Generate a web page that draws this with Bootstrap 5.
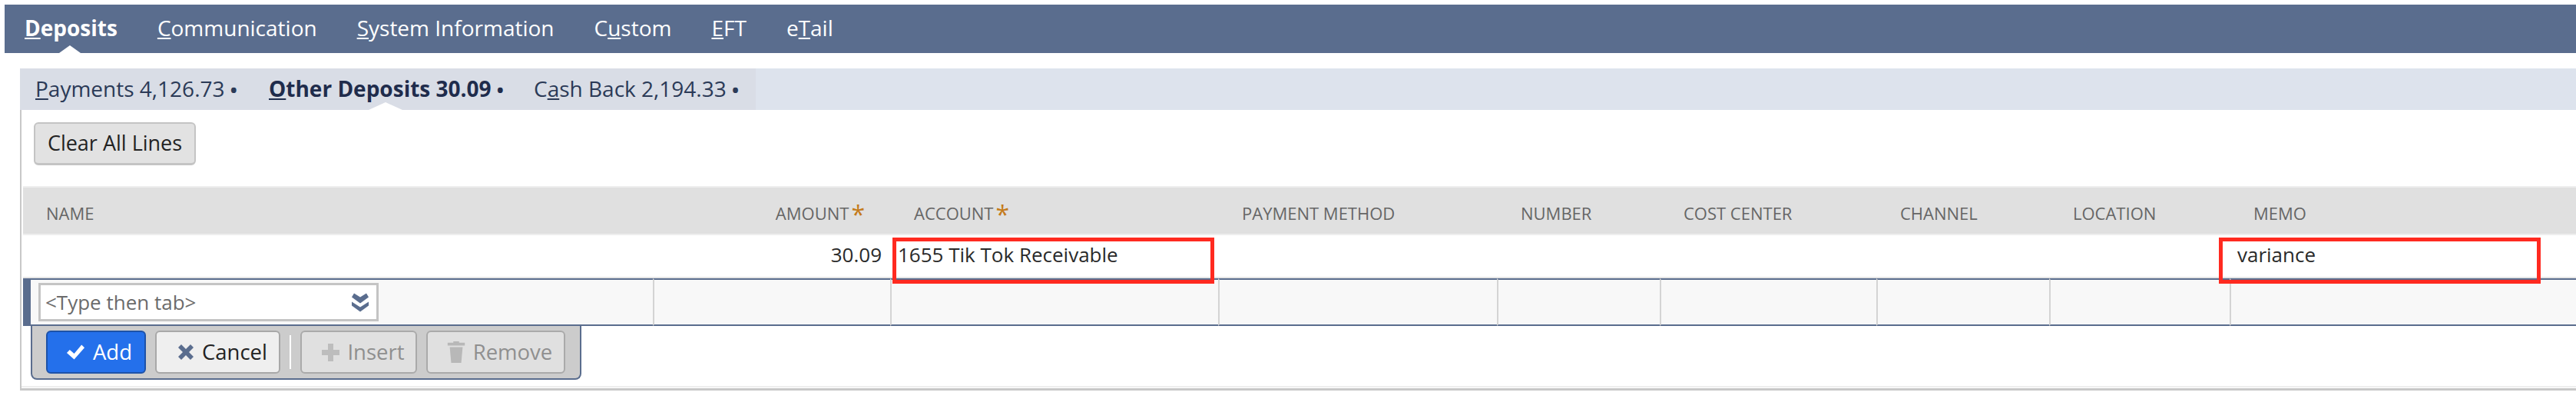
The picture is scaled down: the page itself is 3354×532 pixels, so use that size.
<!DOCTYPE html>
<html lang="en"><head><meta charset="utf-8"><title>Deposits</title>
<link rel="stylesheet" href="https://cdn.jsdelivr.net/npm/bootstrap@5.3.0/dist/css/bootstrap.min.css">
<style>
html,body{height:532px;overflow:hidden;background:#fff}
body{font-family:"Open Sans",sans-serif;color:#222;position:relative}
.top-tabs{margin:6px 0 0 6px;height:63px;background:#5a6d8e;padding-left:26px;gap:52px;font-size:28px;color:#fff;position:relative}
.top-tabs span{position:relative;line-height:61px;height:63px}
.top-tabs .on{font-weight:700}
.top-tabs .on::after{content:"";position:absolute;left:45px;bottom:0;border:14px solid transparent;border-top:0;border-bottom:10px solid #fff}
.sub-wrap{margin:20px 0 0 26px;height:54px;background:#dde3ed}
.sub-tabs{height:54px;width:958px;background:#d9dde6;padding-left:20px;font-size:28px;color:#2b3a57}
.sub-tabs span{position:relative;line-height:53px;white-space:nowrap}
.sub-tabs .t1{width:304px}.sub-tabs .t2{width:345px;font-weight:700;color:#1f2c4c}
.sub-tabs .dot{font-weight:700;font-size:24px}
.sub-tabs .t2::after{content:"";position:absolute;left:130px;bottom:0;border:22px solid transparent;border-top:0;border-bottom:10px solid #fff}
.panel-box{margin-left:26px;border-left:2px solid #c8c8c8;border-bottom:3px solid #c8c8c8;height:365px;box-shadow:inset 0 -1px 0 #fff,inset 0 -3px 0 #eee}
.clear-row{padding:16px 0 27px 16px}
.btn-clear{width:211px;height:56px;padding:0;background:#e2e2e2;border:2px solid #c4c4c4;border-bottom-width:3px;border-radius:6px;font-size:27px;color:#222}
.grid-t{table-layout:fixed;width:3324px;margin:0 0 0 2px;--bs-table-bg:transparent;border-collapse:separate;border-spacing:0}
.grid-t th,.grid-t td{padding:0;border:0;vertical-align:middle}
.grid-t th{height:64px;background:#e0e0e0;border-top:2px solid #eee;border-bottom:2px solid #eee;font-weight:400;font-size:22px;color:#666;text-transform:uppercase;padding:7px 0 0 31px;white-space:nowrap}
.grid-t th:first-child{padding-left:30px}
.grid-t th.num{text-align:right;padding:7px 33px 0 0}
.req{color:#c47b1b;font-size:32px;line-height:0;position:relative;top:5px;margin-left:3px}
.grid-t td.v{height:56px;border-bottom:2px solid #e6e6e6;font-size:26px;color:#2a2a2a;vertical-align:top;padding:6px 0 0 10px}
.grid-t td.v.r{text-align:right;padding:6px 11px 0 0}
.grid-t tr.edit td{height:62px;background:#f8f8f8;border-top:2px solid #5a6d8e;border-bottom:2px solid #5a6d8e;border-left:2px solid #d4d4d4}
.grid-t tr.edit td:first-child{border-left:10px solid #5a6d8e;padding-left:10px}
.picker{width:443px;height:50px;background:#fff;border:3px solid #c4c4c4;padding:0 8px 0 6px;font-size:26px;color:#6b6b6b}
.tool{margin-left:12px;width:717px;height:70px;background:#ccc;border:2px solid #5a6d8e;border-top:0;border-radius:0 0 8px 8px;padding:6px 18px 0 18px;gap:12px}
.tbtn{height:56px;padding:0 0 0 12px;border-radius:6px;font-size:27.5px;display:flex;align-items:center;justify-content:center;gap:10px;flex:none}
.b-add{width:130px;padding-left:8px;background:#2470eb;border:2px solid #1d52a8;color:#fff}
.b-can{width:163px;background:#efefef;border:2px solid #a8a8a8;color:#222}
.btn.b-dis:disabled{background:#e0e0e0;border:2px solid #aaa;color:#8f8f8f;opacity:1}
.b-ins{width:152px}.b-rem{width:181px;padding-left:10px}
.sep{width:2px;height:44px;background:#fff;align-self:flex-start;margin-top:6px}
.redbox{position:absolute;top:309px;height:60px;width:419px;border:5px solid #ff2a20}
</style></head>
<body>
<nav class="top-tabs d-flex">
<span class="on"><u>D</u>eposits</span><span><u>C</u>ommunication</span><span><u>S</u>ystem Information</span><span>C<u>u</u>stom</span><span><u>E</u>FT</span><span>e<u>T</u>ail</span>
</nav>
<div class="sub-wrap">
<div class="sub-tabs d-flex">
<span class="t1"><u>P</u>ayments 4,126.73 <span class="dot">•</span></span>
<span class="t2"><u>O</u>ther Deposits 30.09 <span class="dot">•</span></span>
<span>C<u>a</u>sh Back 2,194.33 <span class="dot">•</span></span>
</div></div>
<div class="panel-box">
<div class="clear-row"><button type="button" class="btn btn-clear">Clear All Lines</button></div>
<table class="table table-borderless mb-0 grid-t">
<colgroup><col style="width:820px"><col style="width:309px"><col style="width:427px"><col style="width:363px"><col style="width:212px"><col style="width:282px"><col style="width:225px"><col style="width:235px"><col></colgroup>
<thead><tr><th>Name</th><th class="num">Amount<span class="req">*</span></th><th>Account<span class="req">*</span></th><th>Payment Method</th><th>Number</th><th>Cost Center</th><th>Channel</th><th>Location</th><th>Memo</th></tr></thead>
<tbody>
<tr><td class="v"></td><td class="v r">30.09</td><td class="v">1655 Tik Tok Receivable</td><td class="v"></td><td class="v"></td><td class="v"></td><td class="v"></td><td class="v"></td><td class="v">variance</td></tr>
<tr class="edit"><td><div class="picker d-flex align-items-center justify-content-between"><span>&lt;Type then tab&gt;</span>
<svg width="26" height="27" viewBox="0 0 26 26" aria-hidden="true"><path d="M5 1l8 5 8-5 3 5-11 8L2 6z M2 12l11 7 11-7v5L13 25 2 17z" fill="#5a6d8e"/></svg></div></td><td></td><td></td><td></td><td></td><td></td><td></td><td></td><td></td></tr>
</tbody></table>
<div class="tool d-flex">
<button type="button" class="btn tbtn b-add"><svg width="25" height="22" viewBox="0 0 26 22" aria-hidden="true"><path d="M1 12l4-4 6 5L21 1l4 4L11 21z" fill="#fff"/></svg>Add</button>
<button type="button" class="btn tbtn b-can"><svg width="22" height="22" viewBox="0 0 22 22" aria-hidden="true"><path d="M1 5l4-4 6 6 6-6 4 4-6 6 6 6-4 4-6-6-6 6-4-4 6-6z" fill="#5a6d8e"/></svg>Cancel</button>
<div class="sep"></div>
<button type="button" class="btn tbtn b-dis b-ins" disabled><svg width="23" height="23" viewBox="0 0 23 23" aria-hidden="true"><path d="M8 0h7v8h8v7h-8v8H8v-8H0V8h8z" fill="#bdbdbd"/></svg>Insert</button>
<button type="button" class="btn tbtn b-dis b-rem" disabled><svg width="24" height="28" viewBox="0 0 24 30" aria-hidden="true"><path d="M8 0h8v2h8v4H0V2h8z M3 8h18l-2 22H5z" fill="#b8b8b8"/></svg>Remove</button>
</div>
</div>
<div class="redbox" style="left:1162px"></div>
<div class="redbox" style="left:2889px"></div>
</body></html>
